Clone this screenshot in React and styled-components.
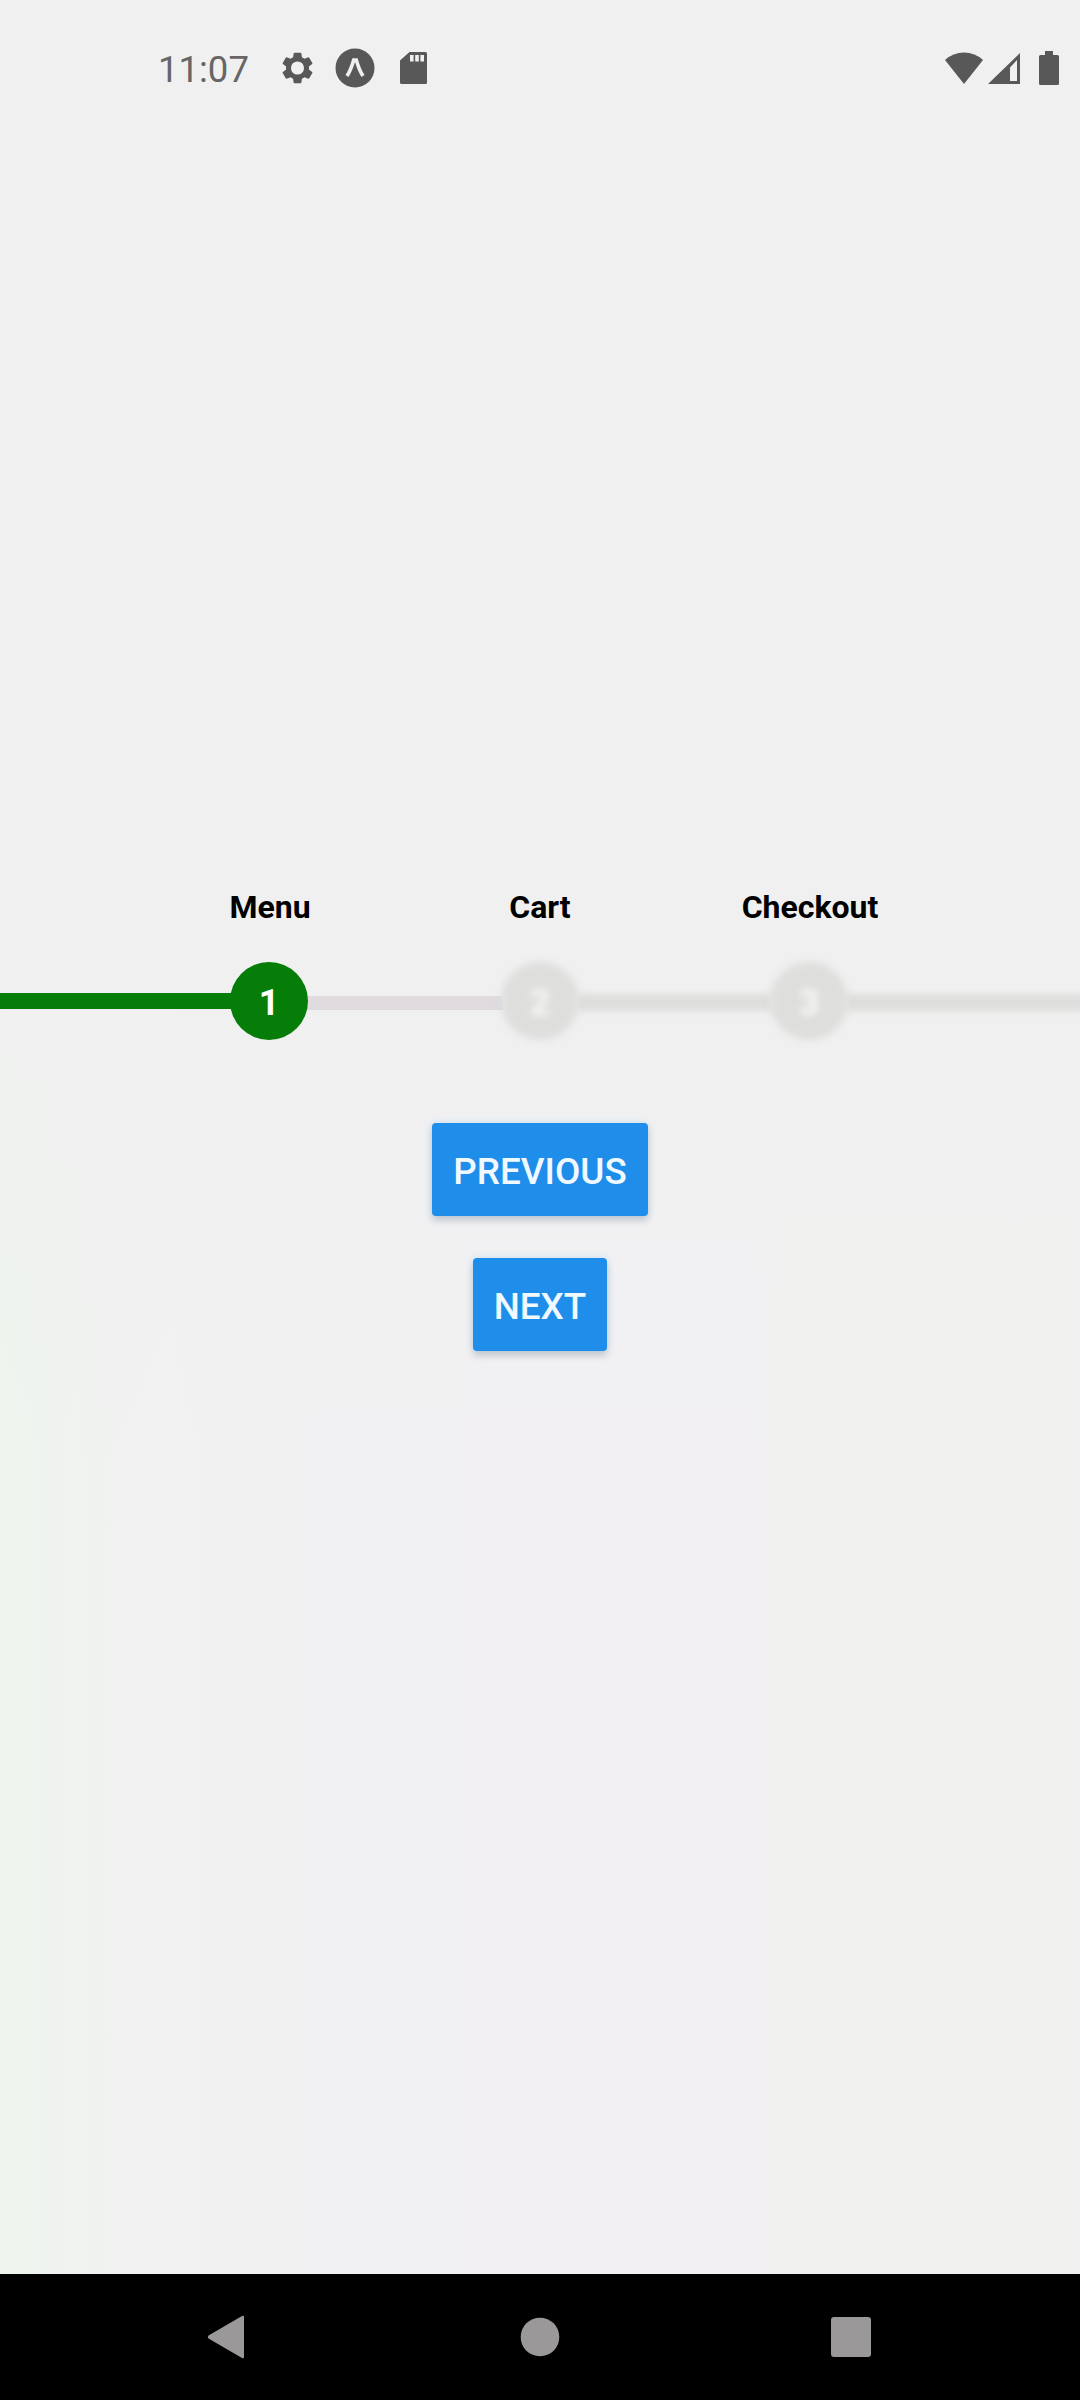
import React from "react";
import styled, { createGlobalStyle, css } from "styled-components";

const GlobalStyle = createGlobalStyle`
  * { box-sizing: border-box; }
  body { margin: 0; background: #f0f0f0; }
`;

const Screen = styled.div`
  width: 1080px;
  height: 2400px;
  display: flex;
  flex-direction: column;
  overflow: hidden;
  font-family: Roboto, "Liberation Sans", sans-serif;
  background: #f0f0f0;
`;

const StatusBar = styled.header`
  height: 136px;
  flex: none;
  display: flex;
  align-items: center;
  justify-content: space-between;
  padding: 0 21px 0 158px;
  color: #585858;
`;

const StatusGroup = styled.div`
  display: flex;
  align-items: center;
`;

const Clock = styled.time`
  width: 124px;
  font-size: 36.5px;
  line-height: 44px;
  padding-top: 3px;
  color: #666;
`;

const Glyph = styled.svg`
  display: block;
  flex: none;
  width: ${(p) => p.$w}px;
  height: ${(p) => p.$h}px;
  margin-left: ${(p) => p.$gap || 0}px;
  fill: currentColor;
`;

const Content = styled.main`
  flex: 1;
  display: flex;
  flex-direction: column;
  align-items: center;
  padding-top: 749px;
  background:
    linear-gradient(to bottom, #f0f0f0 36%, rgba(240, 240, 240, 0) 62%),
    linear-gradient(to right, #edf4ed 0, #f0f2f0 90px, #f1f0f2 330px, #f2f0f3 500px, #f2f0f3 760px, #f0f0ef 775px);
`;

const Stepper = styled.section`
  width: 100%;
`;

const Labels = styled.div`
  display: grid;
  grid-template-columns: repeat(3, 270px);
  justify-content: center;
`;

const Label = styled.div`
  text-align: center;
  font-size: 32px;
  line-height: 44px;
  font-weight: 700;
  color: #000;
`;

const Track = styled.div`
  display: flex;
  align-items: center;
  height: 78px;
  margin-top: 33px;
`;

const Segment = styled.div`
  flex: none;
  width: ${(p) => p.$w}px;
  height: ${(p) => (p.$done ? 16 : 14)}px;
  margin-top: ${(p) => (p.$done ? 0 : 3)}px;
  background: ${(p) => (p.$done ? "#067d08" : "#dfdbdf")};
  ${(p) => p.$soft && css`
    height: 17px;
    background: #dededc;
    filter: blur(3px);
  `}
`;

const Circle = styled.div`
  flex: none;
  width: 78px;
  height: 78px;
  margin: 0 -2px;
  z-index: 1;
  border-radius: 50%;
  display: flex;
  align-items: center;
  justify-content: center;
  padding-top: 3px;
  font-size: 36px;
  font-weight: 700;
  color: ${(p) => (p.$done ? "#fff" : "#f8f8f4")};
  background: ${(p) => (p.$done ? "#067d08" : "#dededd")};
  ${(p) => !p.$done && css`filter: blur(3.6px);`}
`;

const Actions = styled.div`
  display: flex;
  flex-direction: column;
  align-items: center;
  gap: 42px;
  margin-top: 83px;
`;

const Button = styled.button`
  height: 93px;
  width: ${(p) => p.$w}px;
  padding: 4px 0 0;
  border: 0;
  border-radius: 4px;
  background: #1f8eea;
  color: #f0f9ff;
  font: 500 36.8px/44px Roboto, "Liberation Sans", sans-serif;
  text-transform: uppercase;
  box-shadow: 0 5px 7px rgba(60, 70, 80, 0.2), 0 0 7px rgba(120, 200, 250, 0.35);
`;

const NavBar = styled.nav`
  flex: none;
  height: 126px;
  display: grid;
  grid-template-columns: repeat(3, 311px);
  justify-content: center;
  align-items: center;
  justify-items: center;
  background: #000;
  color: #9a9898;
`;

const steps = ["Menu", "Cart", "Checkout"];
const segmentWidths = [232, 197, 195];
const current = 1;

export default function App() {
  return (
    <Screen>
      <GlobalStyle />
      <StatusBar>
        <StatusGroup>
          <Clock>11:07</Clock>
          <Glyph $w={31} $h={32} viewBox="2.3 2 19.4 20" preserveAspectRatio="none">
            <path d="M19.14 12.94c.04-.3.06-.61.06-.94 0-.32-.02-.64-.07-.94l2.03-1.58a.49.49 0 0 0 .12-.61l-1.92-3.32a.49.49 0 0 0-.59-.22l-2.39.96c-.5-.38-1.03-.7-1.62-.94l-.36-2.54a.48.48 0 0 0-.48-.41h-3.84a.48.48 0 0 0-.47.41l-.36 2.54c-.59.24-1.13.57-1.62.94l-2.39-.96a.48.48 0 0 0-.59.22L2.74 8.87a.48.48 0 0 0 .12.61l2.03 1.58c-.05.3-.09.63-.09.94s.02.64.07.94l-2.03 1.58a.49.49 0 0 0-.12.61l1.92 3.32c.12.22.37.29.59.22l2.39-.96c.5.38 1.03.7 1.62.94l.36 2.54c.05.24.24.41.48.41h3.84c.24 0 .44-.17.47-.41l.36-2.54c.59-.24 1.13-.56 1.62-.94l2.39.96c.22.08.47 0 .59-.22l1.92-3.32a.48.48 0 0 0-.12-.61l-2.01-1.58zM12 16.1A4.1 4.1 0 1 1 12 7.9a4.1 4.1 0 0 1 0 8.2z" />
          </Glyph>
          <Glyph $w={40} $h={40} $gap={22} viewBox="0 0 40 40">
            <circle cx="20" cy="20" r="19.5" />
            <path d="M12 28 C15.5 22.5 17.3 17 18.7 12 H21.3 C22.7 17 24.5 22.5 28 28" fill="none" stroke="#f0f0f0" strokeWidth="3.6" />
          </Glyph>
          <Glyph $w={27} $h={32} $gap={25} viewBox="0 0 27 32">
            <path fillRule="evenodd" d="M9.5 0H25.5Q27 0 27 1.5V30.5Q27 32 25.5 32H1.5Q0 32 0 30.5V8.5ZM10 3V9.5H13.6V3ZM15.2 3V9.5H18.8V3ZM20.4 3V9.5H24V3Z" />
          </Glyph>
        </StatusGroup>
        <StatusGroup>
          <Glyph $w={38} $h={32} viewBox="0 0 38 32">
            <path d="M0 8Q8 0.5 19 0.5Q30 0.5 38 8L19 32Z" />
          </Glyph>
          <Glyph $w={32} $h={31} $gap={5} viewBox="0 0 32 31">
            <path fillRule="evenodd" d="M32 0V31H0ZM29 7L22 14.5V28H29Z" />
          </Glyph>
          <Glyph $w={20} $h={34} $gap={19} viewBox="0 0 20 34">
            <path d="M6 0H14V4H18.5Q20 4 20 5.5V32.5Q20 34 18.5 34H1.5Q0 34 0 32.5V5.5Q0 4 1.5 4H6Z" />
          </Glyph>
        </StatusGroup>
      </StatusBar>

      <Content>
        <Stepper>
          <Labels>
            {steps.map((s) => (
              <Label key={s}>{s}</Label>
            ))}
          </Labels>
          <Track>
            {steps.map((s, i) => (
              <React.Fragment key={s}>
                <Segment $w={segmentWidths[i]} $done={i < current} $soft={i > current} />
                <Circle $done={i < current}>{i + 1}</Circle>
              </React.Fragment>
            ))}
            <Segment $w={242} $soft />
          </Track>
        </Stepper>
        <Actions>
          <Button $w={216}>Previous</Button>
          <Button $w={134}>Next</Button>
        </Actions>
      </Content>

      <NavBar>
        <Glyph $w={44} $h={44} viewBox="0 0 44 44">
          <path d="M35 1Q37 0 37 2V42Q37 44 35 43L1.5 23.5Q0 22 1.5 20.5Z" />
        </Glyph>
        <Glyph $w={40} $h={40} viewBox="0 0 40 40">
          <circle cx="20" cy="20" r="19.3" />
        </Glyph>
        <Glyph $w={40} $h={40} viewBox="0 0 40 40">
          <rect width="40" height="40" rx="3" />
        </Glyph>
      </NavBar>
    </Screen>
  );
}
